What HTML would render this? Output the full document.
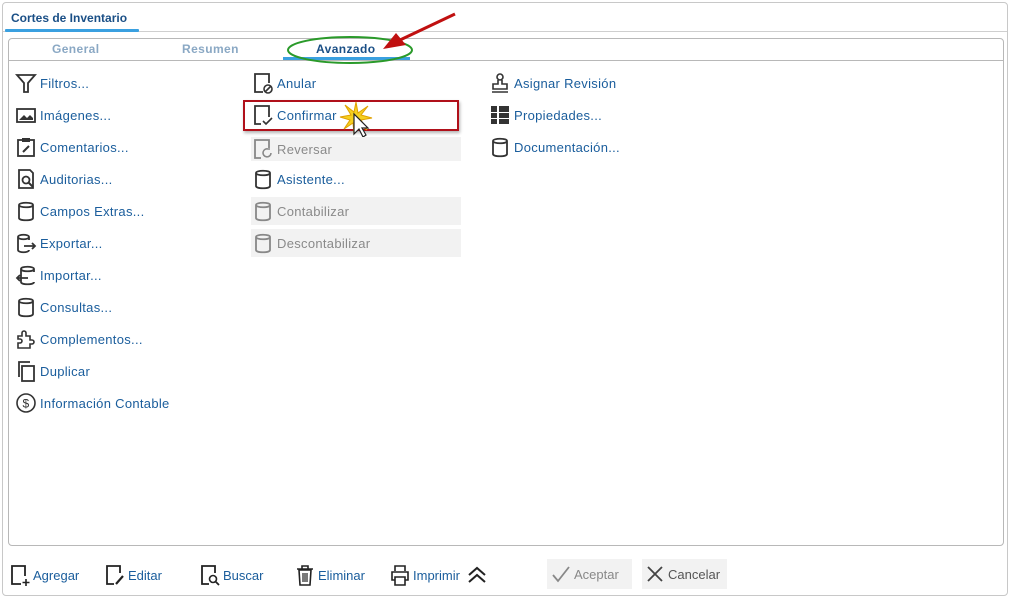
<!DOCTYPE html>
<html><head><meta charset="utf-8"><style>
*{margin:0;padding:0;box-sizing:border-box}
body{width:1011px;height:598px;background:#fff;font-family:"Liberation Sans",Arial,sans-serif;position:relative;overflow:hidden}
.a{position:absolute}
.it{position:absolute;height:22px;display:flex;align-items:center;font-size:13px;letter-spacing:.3px;color:#1a5d9c;white-space:nowrap}
.it svg{width:22px;height:22px;margin-right:3px;flex:none}
.dis{color:#8a8a8a;background:#f2f2f2}
.bt{position:absolute;top:563px;height:24px;display:flex;align-items:center;font-size:13px;color:#1a5d9c}
.bt svg{width:22px;height:22px;margin-right:2px}
</style></head><body>
<div class="a" style="left:2px;top:2px;width:1006px;height:594px;border:1px solid #c8c8c8;border-radius:4px"></div>
<div class="a" style="left:3px;top:31px;width:1004px;height:1px;background:#cfcfcf"></div>
<div class="a" style="left:11px;top:11px;font-size:12px;font-weight:bold;color:#1a4f86">Cortes de Inventario</div>
<div class="a" style="left:5px;top:29px;width:134px;height:3px;background:#3aa0e0;border-radius:1px"></div>
<div class="a" style="left:8px;top:38px;width:996px;height:508px;border:1px solid #b8b8b8;border-radius:4px"></div>
<div class="a" style="left:9px;top:60px;width:994px;height:1px;background:#b8b8b8"></div>
<div class="a" style="left:52px;top:42px;font-size:12px;font-weight:bold;color:#8aa8c4;letter-spacing:.4px">General</div>
<div class="a" style="left:182px;top:42px;font-size:12px;font-weight:bold;color:#8aa8c4;letter-spacing:.4px">Resumen</div>
<div class="a" style="left:316px;top:42px;font-size:12px;font-weight:bold;color:#1a4f86;letter-spacing:.4px">Avanzado</div>
<div class="a" style="left:283px;top:57px;width:127px;height:3px;background:#3aa0e0"></div>
<svg class="a" style="left:0;top:0" width="1011" height="80"><ellipse cx="350" cy="50" rx="62" ry="13" fill="none" stroke="#2a9a2a" stroke-width="2"/><line x1="455" y1="14" x2="400" y2="40" stroke="#c01010" stroke-width="3"/><polygon points="383,49 396,33 406,45" fill="#c01010"/></svg>

<!-- col1 -->
<div class="it" style="left:15px;top:72px"><svg viewBox="0 0 22 22"><path d="M2 3H20L13 11V20H9V11Z" fill="none" stroke="#333" stroke-width="1.8"/></svg>Filtros...</div>
<div class="it" style="left:15px;top:104px"><svg viewBox="0 0 22 22"><rect x="2" y="5" width="18" height="13" fill="none" stroke="#333" stroke-width="1.8"/><path d="M4 16L9 11 12 14 15 11 18 14V16Z" fill="#333"/></svg>Imágenes...</div>
<div class="it" style="left:15px;top:136px"><svg viewBox="0 0 22 22"><rect x="3" y="4" width="16" height="16" fill="none" stroke="#333" stroke-width="1.8"/><rect x="7" y="2" width="8" height="4" fill="#333"/><path d="M8 16L14 10" stroke="#333" stroke-width="2"/></svg>Comentarios...</div>
<div class="it" style="left:15px;top:168px"><svg viewBox="0 0 22 22"><path d="M4 2H15L18 5V20H4Z" fill="none" stroke="#333" stroke-width="1.8"/><circle cx="11" cy="12" r="3.5" fill="none" stroke="#333" stroke-width="1.8"/><path d="M13.5 14.5L18 19" stroke="#333" stroke-width="2"/></svg>Auditorias...</div>
<div class="it" style="left:15px;top:200px"><svg viewBox="0 0 22 22"><path d="M4 5V18C4 21 18 21 18 18V5M4 5C4 2 18 2 18 5C18 8 4 8 4 5" fill="none" stroke="#333" stroke-width="1.8"/></svg>Campos Extras...</div>
<div class="it" style="left:15px;top:232px"><svg viewBox="0 0 22 22"><path d="M14 8V5C14 2 3 2 3 5V18C3 21 14 21 14 18M3 5C3 8 14 8 14 5M9 14H20M17 11L20 14 17 17" fill="none" stroke="#333" stroke-width="1.8"/></svg>Exportar...</div>
<div class="it" style="left:15px;top:264px"><svg viewBox="0 0 22 22"><path d="M19 8V5C19 2 6 2 6 5V18C6 21 19 21 19 18M6 5C6 8 19 8 19 5M2 14H13M5 11L2 14 5 17" fill="none" stroke="#333" stroke-width="1.8"/></svg>Importar...</div>
<div class="it" style="left:15px;top:296px"><svg viewBox="0 0 22 22"><path d="M4 5V18C4 21 18 21 18 18V5M4 5C4 2 18 2 18 5C18 8 4 8 4 5" fill="none" stroke="#333" stroke-width="1.8"/></svg>Consultas...</div>
<div class="it" style="left:15px;top:328px"><svg viewBox="0 0 22 22"><path d="M3 8H7V5A2 2 0 0 1 11 5V8H15V12H17A2 2 0 0 1 17 16H15V20H3V15H5A2 2 0 0 0 5 11H3Z" fill="none" stroke="#333" stroke-width="1.6"/></svg>Complementos...</div>
<div class="it" style="left:15px;top:360px"><svg viewBox="0 0 22 22"><rect x="7" y="6" width="12" height="15" fill="none" stroke="#333" stroke-width="1.8"/><path d="M4 17V2H15" fill="none" stroke="#333" stroke-width="1.8"/></svg>Duplicar</div>
<div class="it" style="left:15px;top:392px"><svg viewBox="0 0 22 22"><circle cx="11" cy="11" r="9" fill="none" stroke="#333" stroke-width="1.6"/><text x="11" y="15.5" font-size="12" text-anchor="middle" fill="#333" font-family="Liberation Sans">$</text></svg>Información Contable</div>

<!-- col2 -->
<div class="it" style="left:252px;top:72px"><svg viewBox="0 0 22 22"><path d="M11 20H3V2H17V11" fill="none" stroke="#333" stroke-width="1.8"/><circle cx="16" cy="17" r="4" fill="none" stroke="#333" stroke-width="1.6"/><path d="M13 20L19 14" stroke="#333" stroke-width="1.6"/></svg>Anular</div>
<div class="it" style="left:252px;top:104px"><svg viewBox="0 0 22 22"><path d="M9 20H3V2H17V13" fill="none" stroke="#333" stroke-width="1.8"/><path d="M11 17L14 20 20 14" fill="none" stroke="#333" stroke-width="1.6"/></svg>Confirmar</div>
<div class="a" style="left:243px;top:100px;width:216px;height:31px;border:2px solid #b0101a;box-shadow:1px 2px 3px rgba(0,0,0,.3)"></div>
<svg class="a" style="left:338px;top:100px" width="36" height="42"><polygon points="18,2 20,13 30,6 23,15 34,18 23,20 29,30 19,23 16,34 15,23 6,29 12,20 2,17 13,15 7,5 16,12" fill="#f5d020" stroke="#e0a000"/><path d="M16 14V34L21 29 25 37 28 35 24 28 30 28Z" fill="#fff" stroke="#222" stroke-width="1.2"/></svg>
<div class="it dis" style="left:251px;top:137px;width:210px;height:24px;padding-left:1px"><svg viewBox="0 0 22 22"><path d="M9 20H3V2H17V10" fill="none" stroke="#888" stroke-width="1.8"/><path d="M19 15A4 4 0 1 1 16 11L18 11" fill="none" stroke="#888" stroke-width="1.6"/></svg>Reversar</div>
<div class="it" style="left:252px;top:168px"><svg viewBox="0 0 22 22"><path d="M4 5V18C4 21 18 21 18 18V5M4 5C4 2 18 2 18 5C18 8 4 8 4 5" fill="none" stroke="#333" stroke-width="1.8"/></svg>Asistente...</div>
<div class="it dis" style="left:251px;top:197px;width:210px;height:28px;padding-left:1px"><svg viewBox="0 0 22 22"><path d="M4 5V18C4 21 18 21 18 18V5M4 5C4 2 18 2 18 5C18 8 4 8 4 5" fill="none" stroke="#888" stroke-width="1.8"/></svg>Contabilizar</div>
<div class="it dis" style="left:251px;top:229px;width:210px;height:28px;padding-left:1px"><svg viewBox="0 0 22 22"><path d="M4 5V18C4 21 18 21 18 18V5M4 5C4 2 18 2 18 5C18 8 4 8 4 5" fill="none" stroke="#888" stroke-width="1.8"/></svg>Descontabilizar</div>

<!-- col3 -->
<div class="it" style="left:489px;top:72px"><svg viewBox="0 0 22 22"><circle cx="11" cy="5" r="3" fill="none" stroke="#333" stroke-width="1.6"/><path d="M9 8V12H4V17H18V12H13V8M3 20H19" fill="none" stroke="#333" stroke-width="1.6"/></svg>Asignar Revisión</div>
<div class="it" style="left:489px;top:104px"><svg viewBox="0 0 22 22"><path d="M2 2H8V8H2ZM10 2H20V8H10ZM2 9H8V14H2ZM10 9H20V14H10ZM2 15H8V20H2ZM10 15H20V20H10Z" fill="#333"/></svg>Propiedades...</div>
<div class="it" style="left:489px;top:136px"><svg viewBox="0 0 22 22"><path d="M4 5V18C4 21 18 21 18 18V5M4 5C4 2 18 2 18 5C18 8 4 8 4 5" fill="none" stroke="#333" stroke-width="1.8"/></svg>Documentación...</div>

<!-- bottom -->
<div class="bt" style="left:9px"><svg viewBox="0 0 22 22"><path d="M12 20H3V2H16V12" fill="none" stroke="#222" stroke-width="1.8"/><path d="M17 15V22M13.5 18.5H20.5" stroke="#222" stroke-width="1.6"/></svg>Agregar</div>
<div class="bt" style="left:104px"><svg viewBox="0 0 22 22"><path d="M10 20H3V2H16V9" fill="none" stroke="#222" stroke-width="1.8"/><path d="M12 20L19 12" stroke="#222" stroke-width="2.2"/></svg>Editar</div>
<div class="bt" style="left:199px"><svg viewBox="0 0 22 22"><path d="M10 20H3V2H16V9" fill="none" stroke="#222" stroke-width="1.8"/><circle cx="14" cy="15" r="3.5" fill="none" stroke="#222" stroke-width="1.6"/><path d="M16.5 17.5L20 21" stroke="#222" stroke-width="1.8"/></svg>Buscar</div>
<div class="bt" style="left:294px"><svg viewBox="0 0 22 22"><path d="M3 5H19M8 5V2H14V5M5 6H17L16 21H6Z" fill="none" stroke="#222" stroke-width="1.6"/><path d="M9 9V18M11 9V18M13 9V18" stroke="#222" stroke-width="1.2"/></svg>Eliminar</div>
<div class="bt" style="left:389px"><svg viewBox="0 0 22 22"><path d="M6 7V2H16V7M6 16H3V8H19V16H16M6 13H16V21H6Z" fill="none" stroke="#222" stroke-width="1.6"/></svg>Imprimir<svg viewBox="0 0 22 22" style="margin-left:6px"><path d="M3 11L11 4 19 11M3 18L11 11 19 18" fill="none" stroke="#222" stroke-width="2"/></svg></div>
<div class="bt" style="left:547px;top:559px;width:85px;height:30px;background:#f2f2f2;color:#888;padding-left:3px"><svg viewBox="0 0 22 22"><path d="M3 12L8 18 19 4" fill="none" stroke="#888" stroke-width="1.8"/></svg>Aceptar</div>
<div class="bt" style="left:642px;top:559px;width:85px;height:30px;background:#f2f2f2;color:#555;padding-left:2px"><svg viewBox="0 0 22 22"><path d="M4 4L18 18M18 4L4 18" stroke="#444" stroke-width="1.8"/></svg>Cancelar</div>
</body></html>
